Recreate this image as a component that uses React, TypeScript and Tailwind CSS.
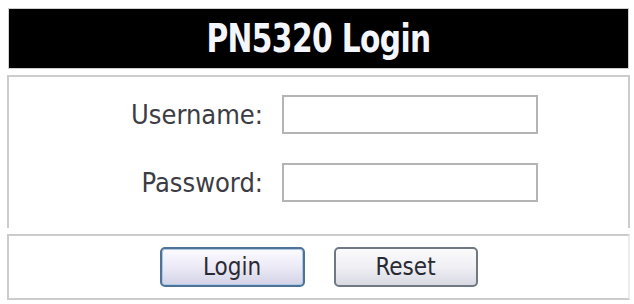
import React from "react";

export default function App() {
  const font = { fontFamily: '"DejaVu Sans Condensed", "DejaVu Sans", Tahoma, sans-serif', fontStretch: "condensed" as const };
  return (
    <div className="w-[634px] h-[304px] bg-white overflow-hidden" style={font}>
      <div className="pt-[8px] pl-[7px] w-[630px]">
        <div className="mx-[1px] border border-[#cfcfcf] bg-black h-[61px] flex items-center justify-center">
          <span className="inline-block text-[33px] font-bold text-[#f4f6ff] leading-none tracking-[-0.6px] scale-y-[1.16]">PN5320 Login</span>
        </div>
        <div className="mt-[6px] border-t-2 border-l-2 border-r-2 border-[#cccccc] h-[153px] pt-[18px]">
          <div className="grid grid-cols-[254px_256px] gap-x-[19px] gap-y-[29px] items-center">
            <label className="text-right text-[27px] text-[#3c3c44] leading-none">Username:</label>
            <input type="text" className="h-[39px] w-[256px] border-2 border-[#b4b4b4] bg-white outline-none" />
            <label className="text-right text-[27px] text-[#3c3c44] leading-none">Password:</label>
            <input type="password" className="h-[39px] w-[256px] border-2 border-[#b4b4b4] bg-white outline-none" />
          </div>
        </div>
        <div className="mt-[6px] border-2 border-[#cccccc] border-r-[#ececec] h-[66px] flex items-center justify-center gap-[29px]">
          <button className="w-[145px] h-[40px] rounded-[5px] border-2 border-[#4f7295] bg-gradient-to-b from-[#fbfbff] via-[#eceaf6] to-[#d3d3e6] text-[24px] text-[#2a2a33] leading-none shadow-[inset_0_0_0_1px_#a9c8ea]">
            Login
          </button>
          <button className="w-[144px] h-[40px] rounded-[5px] border-2 border-[#707884] bg-gradient-to-b from-[#fbfbfd] via-[#efeff4] to-[#d9d9e3] text-[24px] text-[#2a2a33] leading-none">
            Reset
          </button>
        </div>
      </div>
    </div>
  );
}
